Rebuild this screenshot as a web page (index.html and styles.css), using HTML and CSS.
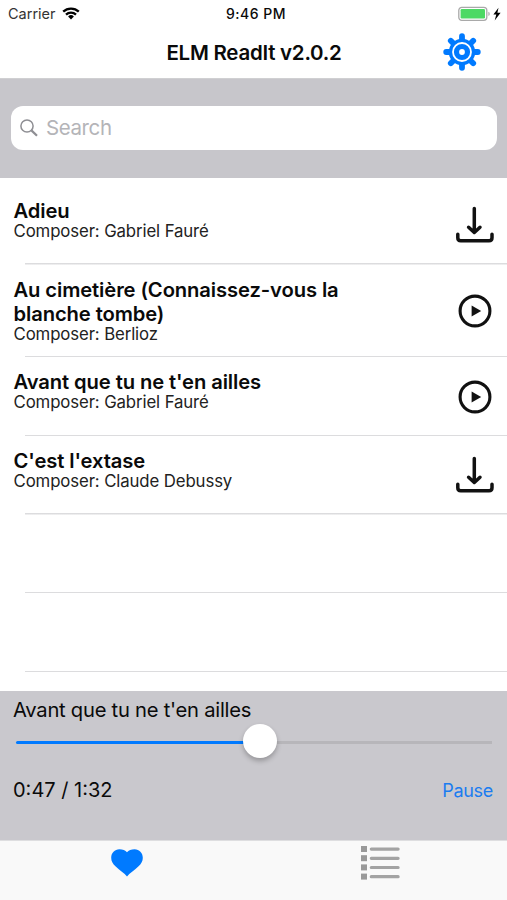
FILE: index.html
```html
<!DOCTYPE html>
<html lang="en">

<head>
  <meta charset="UTF-8" />
  <meta name="viewport" content="width=device-width, initial-scale=1.0" />
  <title>ELM ReadIt</title>
  <link rel="stylesheet" href="styles.css">
</head>

<body>
  <div class="status-bar">
    <div class="carrier">
      <span>Carrier</span>
      <svg width="18" height="13" viewBox="0 0 18 13">
        <g fill="none" stroke="#000" stroke-width="2.3">
          <path d="M1.2 4.7a11.2 11.2 0 0 1 15.6 0" />
          <path d="M4 7.7a7.2 7.2 0 0 1 10 0" />
        </g>
        <path d="M9 12.4l-2.9-2.9a4.1 4.1 0 0 1 5.8 0z" />
      </svg>
    </div>
    <span class="clock">9:46 PM</span>
    <div class="power">
      <svg width="44" height="16" viewBox="0 0 44 16">
        <rect x="0.8" y="1.3" width="28" height="13" rx="3" fill="#fff" stroke="#a9a9a9" stroke-width="1.3" />
        <rect x="2.6" y="3.1" width="24.4" height="9.4" rx="1.2" fill="#4cd964" />
        <path d="M30.4 5.8a2.3 2.3 0 0 1 0 4.2z" fill="#a9a9a9" />
        <path d="M40.5 1.8l-5.1 6.8h2.9l-1.6 5.8 5.9-7.6h-3.2z" />
      </svg>
    </div>
  </div>

  <header class="navbar">
    <h1>ELM ReadIt v2.0.2</h1>
    <button class="settings-button">
      <svg width="38" height="38" viewBox="-19 -19 38 38">
        <g stroke="#007aff" stroke-width="5.8" stroke-linecap="round">
          <path d="M0-15.8V15.8M-15.8 0H15.8" />
          <path d="M-11.2-11.2L11.2 11.2M-11.2 11.2L11.2-11.2" />
        </g>
        <circle r="13.2" fill="#007aff" />
        <circle r="9" fill="none" stroke="#fff" stroke-width="1.8" />
        <circle r="2.9" fill="#fff" />
      </svg>
    </button>
  </header>

  <div class="search">
    <div class="search-box">
      <svg width="18" height="18" viewBox="0 0 18 18" fill="none" stroke="#8e8e93">
        <circle cx="7" cy="7" r="6.1" stroke-width="1.5" />
        <path d="M11.4 11.4l5.6 5.4" stroke-width="2.2" />
      </svg>
      <span>Search</span>
    </div>
  </div>

  <main class="songs">
    <div class="song">
      <div class="song-text">
        <h2>Adieu</h2>
        <p>Composer: Gabriel Fauré</p>
      </div>
      <svg class="song-icon" width="38" height="38" viewBox="0 0 38 38">
        <use href="#download" />
      </svg>
    </div>
    <div class="song tall">
      <div class="song-text">
        <h2>Au cimetière (Connaissez-vous la<br>blanche tombe)</h2>
        <p>Composer: Berlioz</p>
      </div>
      <svg class="song-icon" width="38" height="38" viewBox="0 0 38 38">
        <use href="#play" />
      </svg>
    </div>
    <div class="song">
      <div class="song-text">
        <h2>Avant que tu ne t'en ailles</h2>
        <p>Composer: Gabriel Fauré</p>
      </div>
      <svg class="song-icon" width="38" height="38" viewBox="0 0 38 38">
        <use href="#play" />
      </svg>
    </div>
    <div class="song">
      <div class="song-text">
        <h2>C'est l'extase</h2>
        <p>Composer: Claude Debussy</p>
      </div>
      <svg class="song-icon" width="38" height="38" viewBox="0 0 38 38">
        <use href="#download" />
      </svg>
    </div>
    <div class="song"></div>
    <div class="song"></div>
  </main>

  <section class="player">
    <p class="player-title">Avant que tu ne t'en ailles</p>
    <div class="slider">
      <div class="slider-played" style="width: 51.2%"></div>
      <div class="slider-thumb"></div>
      <div class="slider-rest"></div>
    </div>
    <div class="player-row">
      <span class="time">0:47 / 1:32</span>
      <button class="pause-button">Pause</button>
    </div>
  </section>

  <nav class="tabs">
    <button class="tab">
      <svg width="32" height="28" viewBox="0 0 32 28">
        <path fill="#007aff" d="M16 27.4C13.5 24.6 8.6 21.3 4.7 17.6 1.6 14.6 0.2 12.2 0.2 8.8 0.2 3.9 3.7 0.3 8.4 0.3c3.2 0 6.1 1 7.6 3C17.5 1.3 20.4 0.3 23.6 0.3c4.7 0 8.2 3.6 8.2 8.5 0 3.4-1.4 5.8-4.5 8.8C23.4 21.3 18.5 24.6 16 27.4z" />
      </svg>
    </button>
    <button class="tab">
      <svg width="39" height="34" viewBox="0 0 39 34">
        <g fill="#999">
          <rect x="0" y="0" width="6" height="6" />
          <rect x="0" y="9.2" width="6" height="6" />
          <rect x="0" y="18.4" width="6" height="6" />
          <rect x="0" y="27.6" width="6" height="6" />
        </g>
        <path d="M10.3 3.1h26.8M10.3 12.3h26.8M10.3 21.5h26.8M10.3 30.7h26.8" stroke="#a3a3a3" stroke-width="3.2" stroke-linecap="round" />
      </svg>
    </button>
  </nav>

  <svg class="icon-defs">
    <symbol id="download" viewBox="0 0 38 38">
      <g fill="none" stroke="#111" stroke-width="3.5" stroke-linecap="round" stroke-linejoin="round">
        <path d="M18.3 2.5V26M12.6 21.3l5.7 5.2 5.7-5.2" />
        <path d="M1.8 28.3v3.5q0 3 3 3h28.2q3 0 3-3v-3.5" />
      </g>
    </symbol>
    <symbol id="play" viewBox="0 0 38 38">
      <circle cx="19" cy="19" r="14.9" fill="none" stroke="#111" stroke-width="3.1" />
      <path d="M15.6 13.5v11l9.6-5.5z" fill="#111" />
    </symbol>
  </svg>
</body>

</html>
```

FILE: styles.css
```css
* {
  box-sizing: border-box;
}

body {
  display: flex;
  flex-direction: column;
  height: 900px;
  margin: 0;
  overflow: hidden;
  background-color: white;
  color: #0a0a0a;
  font-family: Inter, "Liberation Sans", sans-serif;
}

h1, h2, p {
  margin: 0;
}

button {
  display: flex;
  padding: 0;
  border: none;
  background: none;
  font-family: inherit;
  cursor: pointer;
}

.status-bar {
  display: grid;
  grid-template-columns: 1fr auto 1fr;
  align-items: center;
  height: 27px;
  padding: 0 5px 0 8px;
  font-size: 14.5px;
}

.carrier {
  display: flex;
  align-items: center;
  gap: 6px;
  color: #333;
}

.clock {
  padding-left: 2px;
  font-size: 14px;
  font-weight: 500;
  letter-spacing: 0.5px;
}

.power {
  display: flex;
  justify-content: flex-end;
}

.navbar {
  display: grid;
  grid-template-columns: 1fr auto 1fr;
  align-items: center;
  height: 52px;
  padding: 0 26px;
  border-bottom: 1px solid #d0d0d2;
}

.navbar h1 {
  grid-column: 2;
  padding-left: 1px;
  font-size: 20.5px;
  font-weight: 600;
  letter-spacing: -0.25px;
}

.settings-button {
  justify-self: end;
  margin-bottom: 2px;
}

.search {
  height: 99px;
  padding: 27px 10px 0 11px;
  background-color: #c7c6cb;
}

.search-box {
  display: flex;
  align-items: center;
  gap: 8px;
  height: 44px;
  padding: 0 9px 1px;
  border-radius: 12px;
  background-color: white;
  color: #b4b4b8;
  font-size: 20.5px;
  letter-spacing: -0.4px;
}

.songs {
  height: 513px;
  padding-top: 8px;
}

.song {
  display: flex;
  justify-content: space-between;
  align-items: center;
  height: 78.7px;
  padding: 0 13px;
  background: linear-gradient(#dcdcde, #dcdcde) 25px 100% / 100% 1.5px no-repeat;
}

.song.tall {
  height: 92.7px;
}

.song-text {
  align-self: flex-start;
  padding: 13px 0 0 0.5px;
}

.song h2 {
  font-size: 20.2px;
  font-weight: 600;
  letter-spacing: -0.1px;
  line-height: 24px;
}

.song p {
  color: #222;
  font-size: 16.8px;
  letter-spacing: -0.12px;
  line-height: 17px;
}

.song-icon {
  flex: none;
}

.player {
  height: 149px;
  padding: 7px 14px 0 13px;
  background-color: #c9c8cd;
}

.player-title {
  font-size: 20.2px;
  letter-spacing: -0.25px;
  line-height: 24px;
}

.slider {
  display: flex;
  align-items: center;
  height: 34px;
  margin: 3px 1px 0 3px;
}

.slider-played {
  height: 3px;
  margin-right: -17px;
  border-radius: 2px;
  background-color: #007aff;
}

.slider-thumb {
  z-index: 1;
  flex: none;
  width: 34px;
  height: 34px;
  margin-top: -2px;
  border-radius: 50%;
  background-color: white;
  box-shadow: 0 3px 5px rgba(0, 0, 0, 0.25);
}

.slider-rest {
  flex: 1;
  height: 3px;
  background-color: #b7b6ba;
}

.player-row {
  display: flex;
  justify-content: space-between;
  align-items: center;
  height: 24px;
  margin-top: 19px;
}

.time {
  font-size: 20px;
}

.pause-button {
  color: #1a7cf0;
  font-size: 18px;
  letter-spacing: -0.3px;
}

.tabs {
  display: flex;
  height: 60px;
  border-top: 1px solid #dedee0;
  background-color: #f9f9f9;
}

.tab {
  flex: 1;
  justify-content: center;
  align-items: center;
  height: 44px;
}

.icon-defs {
  display: none;
}
```
